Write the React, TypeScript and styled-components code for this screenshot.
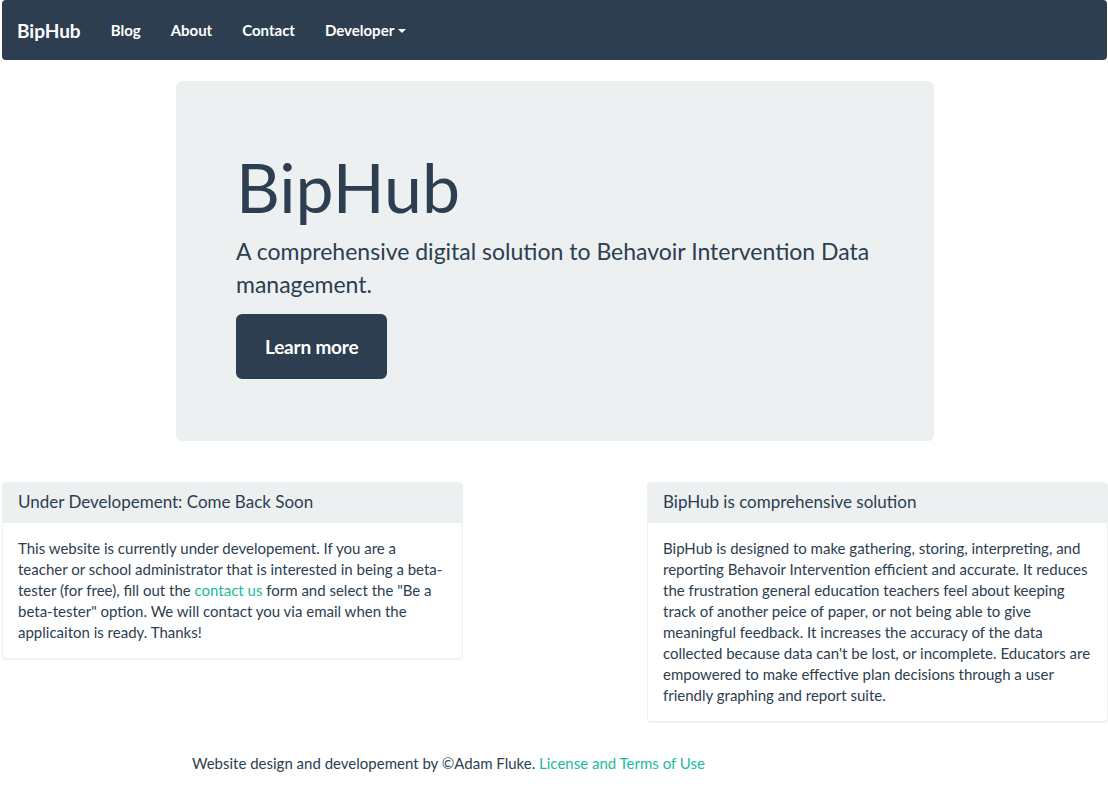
import React from "react";
import styled, { createGlobalStyle } from "styled-components";

const Global = createGlobalStyle`
  html, body { margin: 0; padding: 0; background: #fff; }
  body {
    font-family: Lato, "Helvetica Neue", Arial, sans-serif;
    font-size: 15px;
    line-height: 1.42857;
    color: #2c3e50;
  }
  * { box-sizing: border-box; }
`;

const Page = styled.div`
  padding-left: 2px;
  width: 1108px;
`;

const Navbar = styled.nav`
  display: flex;
  align-items: center;
  height: 60px;
  width: 1105px;
  background: #2c3e50;
  border-radius: 4px;
  margin-bottom: 21px;
`;

const Brand = styled.a`
  padding: 19.5px 15px;
  font-size: 19px;
  font-weight: 700;
  line-height: 21px;
  color: #fff;
  text-decoration: none;
`;

const NavLink = styled.a`
  display: flex;
  align-items: center;
  padding: 19.5px 15px;
  font-size: 15px;
  font-weight: 700;
  line-height: 21px;
  color: #fff;
  text-decoration: none;
`;

const Caret = styled.span`
  display: inline-block;
  width: 0;
  height: 0;
  margin-left: 4px;
  margin-top: 2px;
  border-top: 4px solid #fff;
  border-left: 4px solid transparent;
  border-right: 4px solid transparent;
`;

const Jumbotron = styled.section`
  width: 758px;
  margin: 0 0 41px 174px;
  padding: 48px 60px 62px;
  background: #ecf0f1;
  border-radius: 6px;
`;

const Title = styled.h1`
  margin: 21px 0 10.5px;
  font-size: 68px;
  font-weight: 400;
  line-height: 1.1;
  color: #2c3e50;
`;

const Lead = styled.p`
  margin: 0 0 14px;
  font-size: 23px;
  line-height: 32.2px;
  font-weight: 400;
`;

const BigButton = styled.a`
  display: inline-block;
  padding: 18px 27px;
  font-size: 19px;
  font-weight: 700;
  line-height: 1.3333;
  color: #fff;
  background: #2c3e50;
  border: 2px solid #2c3e50;
  border-radius: 6px;
  text-decoration: none;
  letter-spacing: -0.2px;
`;

const ButtonRow = styled.p`
  margin: 0;
  line-height: 0;
`;

const PanelRow = styled.div`
  display: flex;
  justify-content: space-between;
  align-items: flex-start;
  width: 1106px;
`;

const Panel = styled.div`
  width: 461px;
  margin-bottom: 21px;
  background: #fff;
  border: 1px solid #ecf0f1;
  border-radius: 4px;
  box-shadow: 0 1px 1px rgba(0, 0, 0, 0.05);
`;

const PanelHeading = styled.div`
  padding: 10px 15px;
  background: #ecf0f1;
  border-bottom: 1px solid #ecf0f1;
  border-radius: 3px 3px 0 0;
`;

const PanelTitle = styled.h3`
  margin: 0;
  font-size: 17px;
  font-weight: 400;
  line-height: 1.1;
  color: #2c3e50;
`;

const PanelBody = styled.div`
  padding: 15px;
  font-size: 15px;
  line-height: 21px;
`;

const Link = styled.a`
  color: #18bc9c;
  text-decoration: none;
`;

const Footer = styled.footer`
  width: 758px;
  margin-left: 174px;
  padding: 10px 16px;
  font-size: 15px;
  line-height: 21px;
`;

export default function App() {
  return (
    <>
      <Global />
      <Page>
        <Navbar>
          <Brand href="#">BipHub</Brand>
          <NavLink href="#">Blog</NavLink>
          <NavLink href="#">About</NavLink>
          <NavLink href="#">Contact</NavLink>
          <NavLink href="#">
            Developer
            <Caret />
          </NavLink>
        </Navbar>

        <Jumbotron>
          <Title>BipHub</Title>
          <Lead>
            A comprehensive digital solution to Behavoir Intervention Data
            management.
          </Lead>
          <ButtonRow>
            <BigButton href="#">Learn more</BigButton>
          </ButtonRow>
        </Jumbotron>

        <PanelRow>
          <Panel>
            <PanelHeading>
              <PanelTitle>Under Developement: Come Back Soon</PanelTitle>
            </PanelHeading>
            <PanelBody>
              This website is currently under developement. If you are a
              teacher or school administrator that is interested in being a
              beta-tester (for free), fill out the{" "}
              <Link href="#">contact us</Link> form and select the "Be a
              beta-tester" option. We will contact you via email when the
              applicaiton is ready. Thanks!
            </PanelBody>
          </Panel>
          <Panel>
            <PanelHeading>
              <PanelTitle>BipHub is comprehensive solution</PanelTitle>
            </PanelHeading>
            <PanelBody>
              BipHub is designed to make gathering, storing, interpreting, and
              reporting Behavoir Intervention efficient and accurate. It
              reduces the frustration general education teachers feel about
              keeping track of another peice of paper, or not being able to
              give meaningful feedback. It increases the accuracy of the data
              collected because data can't be lost, or incomplete. Educators
              are empowered to make effective plan decisions through a user
              friendly graphing and report suite.
            </PanelBody>
          </Panel>
        </PanelRow>

        <Footer>
          Website design and developement by ©Adam Fluke.{" "}
          <Link href="#">License and Terms of Use</Link>
        </Footer>
      </Page>
    </>
  );
}
